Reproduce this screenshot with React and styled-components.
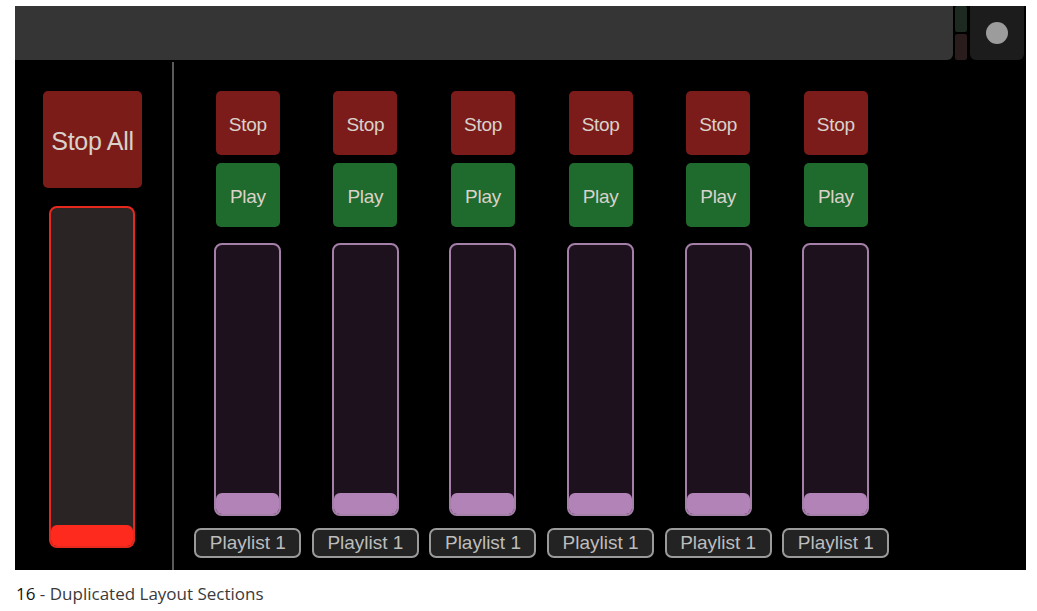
import React from "react";
import styled, { createGlobalStyle } from "styled-components";

const GlobalStyle = createGlobalStyle`
  html, body {
    margin: 0;
    padding: 0;
    background: #ffffff;
  }
`;

const Page = styled.div`
  width: 1037px;
  height: 611px;
  padding: 6px 0 0 15px;
  box-sizing: border-box;
  display: flex;
  flex-direction: column;
`;

const Frame = styled.div`
  width: 1011px;
  height: 564px;
  background: #000;
  display: flex;
  flex-direction: column;
`;

const TopRow = styled.div`
  height: 54px;
  display: flex;
`;

const TitleBar = styled.div`
  width: 938px;
  background: #353535;
  border-radius: 0 0 6px 0;
`;

const StripStack = styled.div`
  width: 12px;
  margin-left: 2px;
  display: flex;
  flex-direction: column;
  gap: 2px;
`;

const Strip = styled.div`
  flex: 1;
  background: ${(p) => p.$color};
  border-radius: 2px;
`;

const KnobBox = styled.div`
  width: 54px;
  margin-left: 3px;
  background: #1c1c1c;
  border-radius: 0 0 6px 6px;
  display: flex;
  align-items: center;
  justify-content: center;
`;

const Knob = styled.div`
  width: 22px;
  height: 22px;
  border-radius: 50%;
  background: #9c9c9c;
`;

const Body = styled.div`
  flex: 1;
  display: flex;
`;

const Master = styled.div`
  width: 157px;
  display: flex;
  flex-direction: column;
  padding: 31px 0 0 28px;
  box-sizing: border-box;
`;

const Divider = styled.div`
  width: 2px;
  margin-top: 2px;
  background: #5a5a5a;
`;

const PadButton = styled.div`
  width: ${(p) => p.$w}px;
  height: ${(p) => p.$h}px;
  background: ${(p) => p.$bg};
  border-radius: 5px;
  display: flex;
  align-items: center;
  justify-content: center;
  padding-top: 3px;
  box-sizing: border-box;
  color: #d9d2cb;
  font-family: "Liberation Sans", Arial, sans-serif;
  font-size: ${(p) => p.$size}px;
  letter-spacing: -0.3px;
`;

const Fader = styled.div`
  width: ${(p) => p.$w}px;
  height: ${(p) => p.$h}px;
  box-sizing: border-box;
  border: 2px solid ${(p) => p.$border};
  background: ${(p) => p.$fill};
  border-radius: 8px;
  display: flex;
  flex-direction: column;
  justify-content: flex-end;
  overflow: hidden;
  margin: ${(p) => p.$margin};
`;

const Handle = styled.div`
  height: 21px;
  background: ${(p) => p.$color};
  border-radius: 6px 6px 0 0;
`;

const Channels = styled.div`
  display: grid;
  grid-template-columns: repeat(6, 117.6px);
  padding-left: 15px;
`;

const Channel = styled.div`
  display: flex;
  flex-direction: column;
  align-items: center;
  padding-top: 31px;
  gap: 8px;
`;

const PlaylistButton = styled.div`
  width: 107px;
  height: 30px;
  box-sizing: border-box;
  border: 2px solid #9a9a9a;
  border-radius: 7px;
  background: #232323;
  color: #bdbdbd;
  font-family: "Liberation Sans", Arial, sans-serif;
  font-size: 19px;
  display: flex;
  align-items: center;
  justify-content: center;
  margin-top: 4px;
`;

const Caption = styled.div`
  font-family: "Open Sans", "Noto Sans", sans-serif;
  font-size: 17px;
  color: #3a3a3a;
  padding-top: 12px;
  margin-left: 1px;
  b {
    font-weight: 400;
    color: #111;
  }
`;

const channels = [1, 2, 3, 4, 5, 6];

export default function App() {
  return (
    <>
      <GlobalStyle />
      <Page>
        <Frame>
          <TopRow>
            <TitleBar />
            <StripStack>
              <Strip $color="#1d2a21" />
              <Strip $color="#2a1b1c" />
            </StripStack>
            <KnobBox>
              <Knob />
            </KnobBox>
          </TopRow>
          <Body>
            <Master>
              <PadButton $w={99} $h={97} $bg="#7b1c19" $size={25}>
                Stop All
              </PadButton>
              <Fader
                $w={86}
                $h={342}
                $border="#e5291f"
                $fill="#2a2424"
                $margin="18px 0 0 6px"
              >
                <Handle $color="#ff2a1e" />
              </Fader>
            </Master>
            <Divider />
            <Channels>
              {channels.map((n) => (
                <Channel key={n}>
                  <PadButton $w={64} $h={64} $bg="#7b1c1a" $size={19}>
                    Stop
                  </PadButton>
                  <PadButton $w={64} $h={64} $bg="#1f6a2d" $size={19}>
                    Play
                  </PadButton>
                  <Fader
                    $w={67}
                    $h={273}
                    $border="#a47fa8"
                    $fill="#1d111d"
                    $margin="8px 0 0 0"
                  >
                    <Handle $color="#b283b7" />
                  </Fader>
                  <PlaylistButton>Playlist 1</PlaylistButton>
                </Channel>
              ))}
            </Channels>
          </Body>
        </Frame>
        <Caption>
          <b>16</b> - Duplicated Layout Sections
        </Caption>
      </Page>
    </>
  );
}
